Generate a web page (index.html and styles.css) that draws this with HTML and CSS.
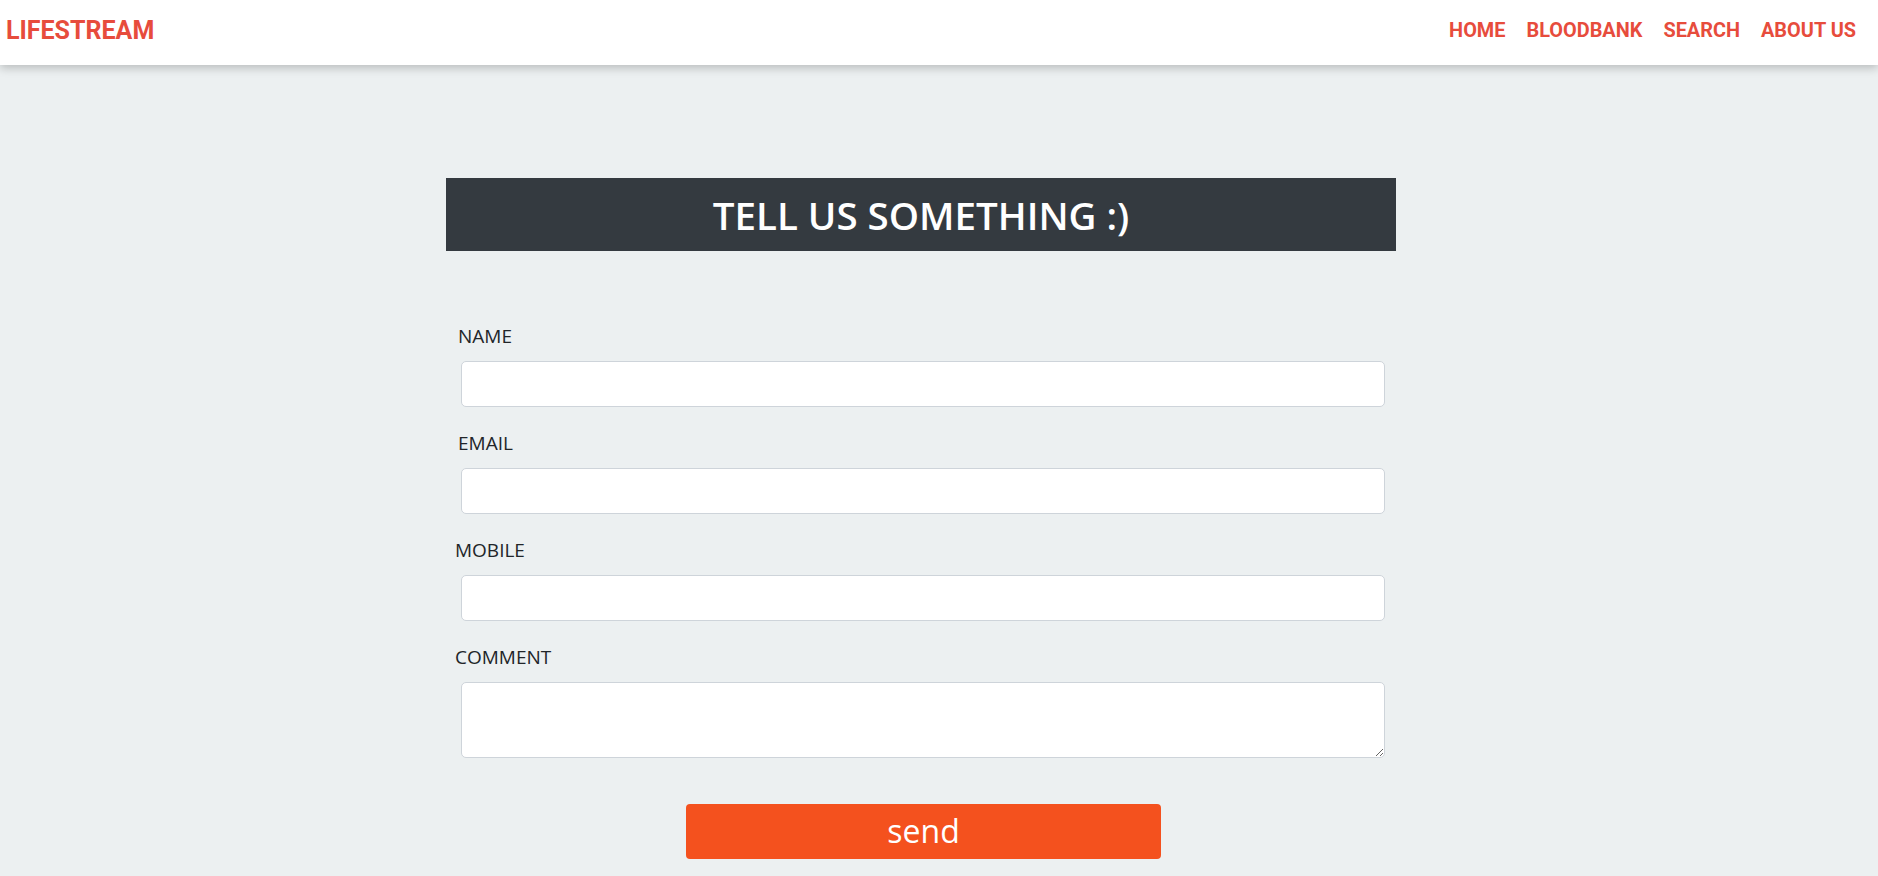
FILE: index.html
```html
<!DOCTYPE html>
<html lang="en">
<head>
<meta charset="utf-8">
<title>LifeStream - Contact</title>
<link rel="stylesheet" href="styles.css">
</head>
<body>
<header class="navbar">
  <a class="brand" href="#">LIFESTREAM</a>
  <nav class="nav">
    <a href="#">HOME</a>
    <a href="#">BLOODBANK</a>
    <a href="#">SEARCH</a>
    <a href="#">ABOUT US</a>
  </nav>
</header>
<main class="main">
  <h2 class="title">TELL US SOMETHING :)</h2>
  <form class="form">
    <div class="group">
      <label class="label">NAME</label>
      <input class="control" type="text">
    </div>
    <div class="group">
      <label class="label">EMAIL</label>
      <input class="control" type="email">
    </div>
    <div class="group">
      <label class="label label-shift">MOBILE</label>
      <input class="control" type="text">
    </div>
    <div class="group">
      <label class="label label-shift2">COMMENT</label>
      <textarea class="control area"></textarea>
    </div>
    <div class="actions">
      <button class="send" type="button">send</button>
    </div>
  </form>
</main>
</body>
</html>
```
FILE: styles.css
```css
* { box-sizing: border-box; }
html, body { margin: 0; padding: 0; }
body {
  background: #ecf0f1;
  font-family: "Open Sans", "Noto Sans", sans-serif;
  color: #212529;
  min-height: 876px;
  overflow: hidden;
}
.navbar {
  height: 65px;
  background: #fff;
  display: flex;
  align-items: center;
  justify-content: space-between;
  padding: 0 22px 4px 6px;
  box-shadow: 0 3px 9px rgba(0,0,0,0.22);
  position: relative;
  z-index: 1;
}
.brand {
  font-family: Roboto, "Liberation Sans", sans-serif;
  font-weight: 700;
  font-size: 25px;
  color: #e74c3c;
  text-decoration: none;
  margin-top: -1px;
}
.nav { display: flex; gap: 21px; }
.nav a {
  font-family: Roboto, "Liberation Sans", sans-serif;
  font-weight: 700;
  font-size: 19.9px;
  color: #e74c3c;
  text-decoration: none;
}
.main {
  padding: 113px 0 0 446px;
}
.title {
  margin: 0;
  width: 950px;
  height: 73px;
  background: #343a40;
  color: #fff;
  display: flex;
  align-items: center;
  justify-content: center;
  font-weight: 600;
  font-size: 38.5px;
  padding-top: 1px;
}
.form { width: 950px; padding-top: 71px; }
.group { margin-bottom: 22px; }
.label {
  display: block;
  font-size: 19px;
  line-height: 28px;
  padding-left: 12px;
  margin-bottom: 11px;
  color: #212529;
}
.label-shift { padding-left: 9px; }
.label-shift2 { padding-left: 9px; }
.control {
  display: block;
  margin-left: 15px;
  width: 924px;
  height: 46px;
  border: 1px solid #ced4da;
  border-radius: 5px;
  background: #fff;
  font: inherit;
}
.area { height: 76px; resize: vertical; }
.actions { display: flex; padding-left: 240px; padding-top: 24px; }
.send {
  width: 475px;
  height: 55px;
  background: #f4511e;
  color: #fff;
  border: none;
  border-radius: 4px;
  font-family: "Open Sans", "Noto Sans", sans-serif;
  font-size: 32px;
  line-height: 1;
  padding: 0 0 1px;
}
```
